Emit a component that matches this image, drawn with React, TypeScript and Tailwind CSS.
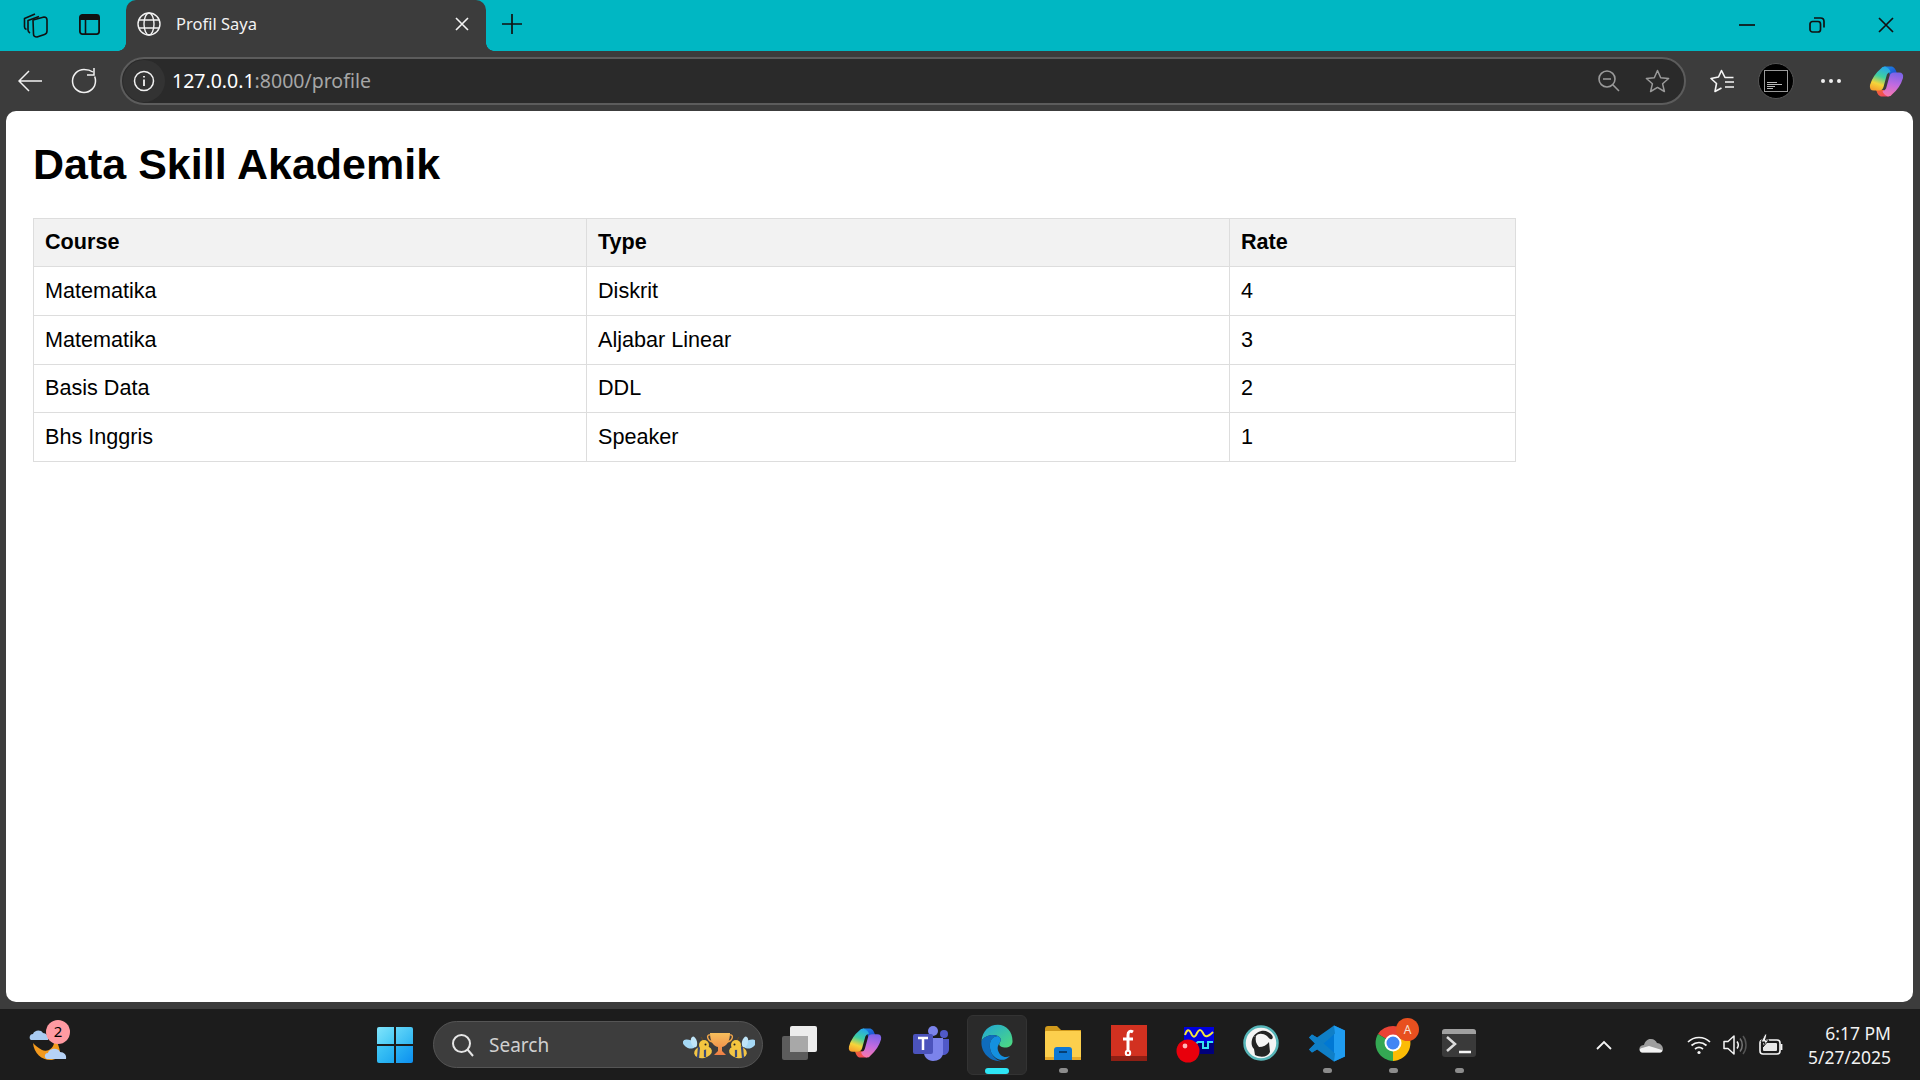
import React from "react";

const Sans = "font-['Noto_Sans','Open_Sans',sans-serif]";

function CopilotLogo({ w = 35, h = 31, id }: { w?: number; h?: number; id: string }) {
  return (
    <svg width={w} height={h} viewBox="0 0 35 31">
      <defs>
        <linearGradient id={id + "a"} x1="0.6" y1="0" x2="0.3" y2="1">
          <stop offset="0" stopColor="#27a8e8" />
          <stop offset="0.4" stopColor="#3fd0a0" />
          <stop offset="0.72" stopColor="#f5d53a" />
          <stop offset="1" stopColor="#f7a12e" />
        </linearGradient>
        <linearGradient id={id + "b"} x1="0.6" y1="0" x2="0.4" y2="1">
          <stop offset="0" stopColor="#7a64e8" />
          <stop offset="0.5" stopColor="#c06ae0" />
          <stop offset="1" stopColor="#f778b0" />
        </linearGradient>
        <linearGradient id={id + "c"} x1="0" y1="0" x2="1" y2="1">
          <stop offset="0" stopColor="#f2682e" />
          <stop offset="1" stopColor="#f0406a" />
        </linearGradient>
        <linearGradient id={id + "d"} x1="0" y1="0" x2="1" y2="1">
          <stop offset="0" stopColor="#1d8fe8" />
          <stop offset="1" stopColor="#1b3fc8" />
        </linearGradient>
      </defs>
      <path d="M15 0.5 L22 0.5 C25 0.5 26.5 3 27.5 6 L28.5 10 L21 10 C20 5 18 2 15 0.5Z" fill={`url(#${id}d)`} />
      <path d="M7 24 L15 24 C16 27 17 29.5 20 30.5 L13 30.5 C10 30.5 8.5 28 7.5 25Z" fill={`url(#${id}c)`} />
      <path d="M12 2.5 Q13 0.5 16 0.5 C19 1.5 21 3.5 21.5 6 C19 6.5 18 8 17.5 10 L14.5 21 Q13.5 24.5 10 24.5 L5 24.5 Q0 24.5 1 19 Q4 9 12 2.5Z" fill={`url(#${id}a)`} />
      <path d="M23 28.5 Q22 30.5 19 30.5 C16 29.5 14 27.5 13.5 25 C16 24.5 17 23 17.5 21 L20.5 10 Q21.5 6.5 25 6.5 L30 6.5 Q35 6.5 34 12 Q31 22 23 28.5Z" fill={`url(#${id}b)`} />
    </svg>
  );
}

function TaskIcon({ children, dot, active }: { children: React.ReactNode; dot?: boolean; active?: boolean }) {
  return (
    <div className="relative w-[66px] h-[66px] flex items-center justify-center">
      {active && <div className="absolute left-[3px] top-[3px] w-[60px] h-[60px] rounded-[6px] bg-[#2a2a2a] border border-[#333333]" />}
      <div className="relative flex items-center justify-center mt-[-3px]">{children}</div>
      {dot && <div className="absolute bottom-[5px] left-[29px] w-[9px] h-[5px] rounded-full bg-[#8c8c8c]" />}
      {active && <div className="absolute bottom-[4px] left-[21px] w-[24px] h-[6px] rounded-full bg-[#2ee6f5]" />}
    </div>
  );
}

function TitleBar() {
  return (
    <div className="h-[51px] bg-[#00b7c3] flex items-stretch shrink-0">
      <div className="w-[126px] flex items-center pl-[23px] pb-[2px]">
        <svg width="26" height="26" viewBox="0 0 26 26" fill="none" stroke="#111" strokeWidth="1.6" strokeLinejoin="round">
          <path d="M10 8 L21 5 C23 5 24 6 24 8 L24 19 C24 21 23 22 21.5 22.5 L14 25 C12 25 10.5 24 10.5 22Z" />
          <path d="M7 21 C5.5 20 5 19 5 18 L5 8.5 L16 4.5" />
          <path d="M3.5 17.5 C2 17 1.5 16 1.5 15 L1.5 6.5 L12 2" />
        </svg>
        <svg className="ml-[30px]" width="21" height="21" viewBox="0 0 21 21" fill="none">
          <rect x="0.9" y="0.9" width="19.2" height="19.2" rx="2.5" stroke="#111" strokeWidth="1.8" />
          <path d="M1 3 C1 1.5 2 1 3 1 L18 1 C19 1 20 1.5 20 3 L20 6 L1 6Z" fill="#111" />
          <path d="M6.5 6 L6.5 20" stroke="#111" strokeWidth="1.6" />
        </svg>
      </div>
      <div className="relative w-[360px] bg-[#3c3c3c] rounded-t-[10px] flex items-center pl-[11px] pb-[3px]">
        <div className="absolute left-[-8px] bottom-0 w-[8px] h-[8px] bg-[radial-gradient(circle_at_0_0,#00b7c3_7.5px,#3c3c3c_8px)]" />
        <div className="absolute right-[-8px] bottom-0 w-[8px] h-[8px] bg-[radial-gradient(circle_at_100%_0,#00b7c3_7.5px,#3c3c3c_8px)]" />
        <svg width="24" height="24" viewBox="0 0 24 24" fill="none" stroke="#f2f2f2" strokeWidth="1.4">
          <circle cx="12" cy="12" r="11" />
          <ellipse cx="12" cy="12" rx="5" ry="11" />
          <path d="M1.8 8 L22.2 8 M1.8 16 L22.2 16" />
        </svg>
        <span className={`${Sans} ml-[15px] text-[16.5px] leading-[24px] text-[#f2f2f2]`}>Profil Saya</span>
        <svg className="ml-auto mr-[17px]" width="14" height="14" viewBox="0 0 14 14" stroke="#f5f5f5" strokeWidth="1.6">
          <path d="M1 1 L13 13 M13 1 L1 13" />
        </svg>
      </div>
      <div className="flex items-center pl-[16px] pb-[3px]">
        <svg width="20" height="20" viewBox="0 0 20 20" stroke="#111" strokeWidth="1.7">
          <path d="M10 0 L10 20 M0 10 L20 10" />
        </svg>
      </div>
      <div className="ml-auto flex items-center pb-[1px]">
        <div className="w-[70px] flex justify-center">
          <svg width="16" height="4" viewBox="0 0 16 4"><path d="M0 2 L16 2" stroke="#111" strokeWidth="1.7" /></svg>
        </div>
        <div className="w-[70px] flex justify-center">
          <svg width="16" height="16" viewBox="0 0 16 16" fill="none" stroke="#111" strokeWidth="1.7">
            <rect x="1" y="4.5" width="10.5" height="10.5" rx="2.5" />
            <path d="M5 1 L11.5 1 C13.5 1 15 2.5 15 4.5 L15 10.5" />
          </svg>
        </div>
        <div className="w-[68px] flex justify-center pr-[1px]">
          <svg width="16" height="16" viewBox="0 0 16 16" stroke="#111" strokeWidth="1.7"><path d="M1 1 L15 15 M15 1 L1 15" /></svg>
        </div>
      </div>
    </div>
  );
}

function Toolbar() {
  return (
    <div className="h-[60px] bg-[#3c3c3c] flex items-center shrink-0">
      <div className="w-[120px] flex items-center pl-[18px] shrink-0">
        <svg width="24" height="24" viewBox="0 0 24 24" fill="none" stroke="#f2f2f2" strokeWidth="1.5">
          <path d="M24 12 L1 12 M11 2 L1 12 L11 22" />
        </svg>
        <svg className="ml-[29px]" width="26" height="26" viewBox="0 0 26 26" fill="none" stroke="#f2f2f2" strokeWidth="1.5">
          <path d="M22 4 C19.5 2.3 16.5 1.5 13 1.5 C6.6 1.5 1.5 6.6 1.5 13 C1.5 19.4 6.6 24.5 13 24.5 C19.4 24.5 24.5 19.4 24.5 13 C24.5 11.5 24.2 10 23.7 8.6" />
          <path d="M23 0 L23 7 L16 7" />
        </svg>
      </div>
      <div className="w-[1566px] h-[48px] rounded-full bg-[#2a2a2a] border-2 border-[#5c5c5c] flex items-center shrink-0">
        <div className="w-[42px] h-[42px] ml-[1px] rounded-full bg-[#333333] flex items-center justify-center shrink-0">
          <svg width="22" height="22" viewBox="0 0 22 22" fill="none" stroke="#f2f2f2" strokeWidth="1.5">
            <circle cx="11" cy="11" r="9.5" />
            <path d="M11 9.5 L11 16 M11 6 L11 7.6" strokeWidth="1.8" />
          </svg>
        </div>
        <span className={`${Sans} ml-[7px] text-[19.5px] leading-[30px] text-[#a6a6a6]`}>
          <span className="text-white">127.0.0.1</span>:8000/profile
        </span>
        <div className="ml-auto flex items-center pr-[14px]">
          <svg width="22" height="22" viewBox="0 0 22 22" fill="none" stroke="#9a9a9a" strokeWidth="1.6">
            <circle cx="9" cy="9" r="8" />
            <path d="M5 9 L13 9 M14.8 14.8 L21 21" />
          </svg>
          <svg className="ml-[25px]" width="25" height="24" viewBox="0 0 25 24" fill="none" stroke="#9a9a9a" strokeWidth="1.5" strokeLinejoin="round">
            <path d="M12.5 1.5 L15.7 8.8 L23.6 9.5 L17.6 14.8 L19.4 22.5 L12.5 18.4 L5.6 22.5 L7.4 14.8 L1.4 9.5 L9.3 8.8Z" />
          </svg>
        </div>
      </div>
      <div className="flex items-center pl-[24px]">
        <svg width="24" height="24" viewBox="0 0 24 24" fill="none" stroke="#f5f5f5" strokeWidth="1.6" strokeLinejoin="round">
          <path d="M23.5 8.5 L15 8.5 L11.5 1.5 L8.5 8 L1 9.5 L6.5 14.5 L5 22.5 L11.5 19" />
          <path d="M15 13 L24 13 M15 18 L24 18" />
        </svg>
        <div className="ml-[24px] w-[36px] h-[36px] rounded-full bg-black border border-[#555555] flex items-center justify-center">
          <div className="w-[24px] h-[22px] border border-[#9a9a9a] flex flex-col justify-end gap-[1px] p-[2px]">
            <div className="h-[1px] w-[10px] bg-[#bbbbbb]" />
            <div className="h-[1px] w-[15px] bg-[#bbbbbb]" />
            <div className="h-[1px] w-[8px] bg-[#bbbbbb]" />
            <div className="h-[1px] w-[6px] bg-[#bbbbbb]" />
          </div>
        </div>
        <svg className="ml-[27px]" width="20" height="4" viewBox="0 0 20 4" fill="#f0f0f0">
          <circle cx="2" cy="2" r="2" /><circle cx="10" cy="2" r="2" /><circle cx="18" cy="2" r="2" />
        </svg>
        <div className="ml-[28px] flex"><CopilotLogo id="cp1" /></div>
      </div>
    </div>
  );
}

const rows: { h: string; c: string[] }[] = [
  { h: "h-[49px]", c: ["Matematika", "Diskrit", "4"] },
  { h: "h-[49px]", c: ["Matematika", "Aljabar Linear", "3"] },
  { h: "h-[48px]", c: ["Basis Data", "DDL", "2"] },
  { h: "h-[49px]", c: ["Bhs Inggris", "Speaker", "1"] },
];

function Page() {
  return (
    <div className="flex-1 min-h-0 ml-[6px] mr-[7px] bg-white rounded-[10px] pt-[28px] pl-[27px]">
      <h1 className="font-['Liberation_Sans',Arial,sans-serif] font-bold text-[43px] leading-[50px] text-black">Data Skill Akademik</h1>
      <table className="mt-[29px] w-[1482px] table-fixed border-collapse font-['Liberation_Sans',Arial,sans-serif] text-[21.6px] text-black">
        <colgroup>
          <col className="w-[553px]" />
          <col className="w-[643px]" />
          <col className="w-[286px]" />
        </colgroup>
        <thead>
          <tr className="h-[48px] bg-[#f2f2f2]">
            {["Course", "Type", "Rate"].map((h) => (
              <th key={h} className="border border-[#dddddd] px-[11px] text-left font-bold">{h}</th>
            ))}
          </tr>
        </thead>
        <tbody>
          {rows.map((r, i) => (
            <tr key={i} className={r.h}>
              {r.c.map((c, j) => (
                <td key={j} className="border border-[#dddddd] px-[11px]">{c}</td>
              ))}
            </tr>
          ))}
        </tbody>
      </table>
    </div>
  );
}

function Taskbar() {
  return (
    <div className="h-[71px] bg-[#1c1c1c] flex items-center shrink-0 relative">
      <div className="relative w-[40px] h-[44px] ml-[28px] shrink-0">
        <svg width="40" height="44" viewBox="0 0 40 44">
          <path d="M5 20 C6 31 15 38 24 37 C29 36 31 33 32 29 C30 18 28 18 26 18 C27 24 20 30 14 27 C10 25 7 22 5 20Z" fill="#f39a1e" />
          <path d="M3 17 C1 16 1 11 5 11 C6 7 13 6 15 10 C18 10 21 13 20 17Z" fill="#a9cbf2" />
          <path d="M19 36 C16 35 16 30 20 30 C21 25 30 24 32 29 C36 29 39 32 38 36Z" fill="#b6d2f6" />
        </svg>
        <div className={`absolute left-[18px] top-[-3px] w-[24px] h-[24px] rounded-full bg-[#ff9aa2] flex items-center justify-center ${Sans} text-[15px] leading-none text-black`}>2</div>
      </div>
      <div className="ml-[309px] w-[36px] h-[36px] grid grid-cols-2 gap-[2px] shrink-0">
        <div className="rounded-tl-[2px] bg-gradient-to-br from-[#7fe4fb] to-[#41c8f5]" />
        <div className="rounded-tr-[2px] bg-gradient-to-br from-[#62d6f8] to-[#2bb5f2]" />
        <div className="rounded-bl-[2px] bg-gradient-to-br from-[#41c8f5] to-[#1ba8f0]" />
        <div className="rounded-br-[2px] bg-gradient-to-br from-[#2bb5f2] to-[#0d8ff0]" />
      </div>
      <div className="ml-[20px] w-[330px] h-[47px] rounded-full bg-[#3d3d3d] border border-[#555555] flex items-center pl-[17px] pr-[7px] shrink-0">
        <svg width="24" height="24" viewBox="0 0 24 24" fill="none" stroke="#e6e6e6" strokeWidth="2">
          <circle cx="10.5" cy="10.5" r="8.5" />
          <path d="M16.5 16.5 L22 23" />
        </svg>
        <span className={`${Sans} ml-[14px] text-[19px] leading-[28px] text-[#d0d0d0]`}>Search</span>
        <svg className="ml-auto" width="72" height="40" viewBox="8 3 72 40">
          <defs>
            <linearGradient id="tr" x1="0" y1="0" x2="0" y2="1">
              <stop offset="0" stopColor="#f7bf5c" />
              <stop offset="1" stopColor="#ef7f45" />
            </linearGradient>
          </defs>
          <ellipse cx="14" cy="22" rx="6.5" ry="4" transform="rotate(25 14 22)" fill="#a5d8f5" />
          <ellipse cx="19" cy="20" rx="3" ry="5.5" transform="rotate(-15 19 20)" fill="#bfe4f8" />
          <ellipse cx="28" cy="30" rx="9" ry="6" transform="rotate(-10 28 30)" fill="#f2c545" />
          <path d="M24 25 L23 36 M30 24 L30 35" stroke="#3b4a78" strokeWidth="2.2" />
          <circle cx="29" cy="23" r="5" fill="#f4c63f" />
          <circle cx="30.5" cy="22.5" r="1" fill="#222" />
          <path d="M28 18 L26 15" stroke="#6b4a20" strokeWidth="1" />
          <path d="M35 11 L55 11 C55 19 52 24 47 25 L47 29 L51 33 L39 33 L43 29 L43 25 C38 24 35 19 35 11Z" fill="url(#tr)" />
          <path d="M35 13 C31 12 32 19 38 20 M55 13 C59 12 58 19 52 20" fill="none" stroke="#f3a64a" strokeWidth="1.4" />
          <ellipse cx="75" cy="22" rx="6.5" ry="4" transform="rotate(-25 75 22)" fill="#a5d8f5" />
          <ellipse cx="70" cy="20" rx="3" ry="5.5" transform="rotate(15 70 20)" fill="#bfe4f8" />
          <ellipse cx="63" cy="30" rx="9" ry="6" transform="rotate(10 63 30)" fill="#f2c545" />
          <path d="M67 25 L68 36 M61 24 L61 35" stroke="#3b4a78" strokeWidth="2.2" />
          <circle cx="61" cy="23" r="5" fill="#f4c63f" />
          <circle cx="59.5" cy="22.5" r="1" fill="#222" />
          <path d="M62 18 L64 15" stroke="#6b4a20" strokeWidth="1" />
        </svg>
      </div>
      <div className="ml-[3px] flex items-center">
        <TaskIcon>
          <svg width="36" height="36" viewBox="0 0 36 36">
            <rect x="1" y="11" width="26" height="24" rx="2" fill="#5c5c5c" />
            <rect x="9" y="1" width="27" height="26" rx="2" fill="#ededed" />
            <rect x="9" y="11" width="18" height="16" fill="#a8a8a8" />
          </svg>
        </TaskIcon>
        <TaskIcon><CopilotLogo id="cp2" w={34} h={38} /></TaskIcon>
        <TaskIcon>
          <svg width="36" height="36" viewBox="0 0 36 36">
            <circle cx="20" cy="6" r="5" fill="#7b83eb" />
            <circle cx="31" cy="9" r="4" fill="#5059c9" />
            <path d="M26 14 L36 14 L36 24 C36 28 33 30 30 30 L26 30Z" fill="#5059c9" />
            <path d="M11 13 L30 13 L30 28 C30 33 25 36 20 36 C15 36 11 32 11 28Z" fill="#7b83eb" />
            <rect x="0" y="9" width="20" height="20" rx="2" fill="#4b53bc" />
            <path d="M5 13 L15 13 M10 13 L10 25" stroke="#fff" strokeWidth="2.5" />
          </svg>
        </TaskIcon>
        <TaskIcon active>
          <svg width="36" height="38" viewBox="0 0 38 44">
            <defs>
              <linearGradient id="ed1" x1="0" y1="0" x2="1" y2="1">
                <stop offset="0" stopColor="#1fa5d8" />
                <stop offset="1" stopColor="#4fdc7d" />
              </linearGradient>
            </defs>
            <path d="M1 20 C2 8 10 1 20 1 C30 1 37 9 37 20 C37 26 31 28 26 27 C22 26 21 24 22 22 C24 19 24 16 20 14 C13 11 4 14 1 20Z" fill="url(#ed1)" />
            <path d="M1 20 C4 14 13 11 20 14 C11 15 9 24 12 32 C14 38 19 42 24 43 C12 44 0 34 1 20Z" fill="#0f6cbd" />
            <path d="M20 14 C11 15 9 24 12 32 C15 40 26 46 34 37 C28 40 22 37 20 30 C19 26 21 24 22 22 C24 19 24 16 20 14Z" fill="#1490df" />
          </svg>
        </TaskIcon>
        <TaskIcon dot>
          <svg width="36" height="34" viewBox="0 0 36 34">
            <path d="M0 3 C0 1 1 0 3 0 L12 0 L16 4 L36 4 L36 10 L0 10Z" fill="#d19a1c" />
            <rect x="0" y="5" width="36" height="29" rx="1" fill="#fccf4d" />
            <path d="M0 31 L36 31 L36 34 L0 34Z" fill="#e6a92a" />
            <path d="M9 34 L9 24 C9 22 10 21 12 21 L24 21 C26 21 27 22 27 24 L27 34Z" fill="#0f78d4" />
            <path d="M14 26 L22 26" stroke="#063f74" strokeWidth="2" />
          </svg>
        </TaskIcon>
        <TaskIcon>
          <div className="relative w-[36px] h-[36px] bg-[#d23120] flex items-center justify-center">
            <div className="absolute left-0 right-0 bottom-0 h-[5px] bg-[#8f1f14]" />
            <svg width="16" height="28" viewBox="0 0 16 28" fill="none" stroke="#fff" strokeWidth="3">
              <path d="M12 3 C9 1 7 3 7 6 L7 21" />
              <path d="M2 10 L12 10" />
              <circle cx="7" cy="24" r="2.2" strokeWidth="2" />
            </svg>
          </div>
        </TaskIcon>
        <TaskIcon>
          <svg width="38" height="42" viewBox="0 0 38 42">
            <rect x="8" y="5" width="30" height="16" fill="#0000e0" />
            <rect x="8" y="21" width="30" height="11" fill="#00007c" />
            <path d="M9 13 C11 7 13 7 15 11 C17 16 19 16 21 11 C23 7 25 7 27 11 C29 16 32 15 37 10" fill="none" stroke="#f5e63c" strokeWidth="2" />
            <path d="M17 24 L22 20 L27 20 L27 26 L32 26 L32 20 L37 20" fill="none" stroke="#36e0f0" strokeWidth="2" />
            <circle cx="12" cy="29" r="11.5" fill="#e8000c" />
            <circle cx="9" cy="24" r="2.4" fill="#ffb8b8" />
          </svg>
        </TaskIcon>
        <TaskIcon>
          <svg width="36" height="36" viewBox="0 0 36 36">
            <circle cx="18" cy="18" r="16.5" fill="#f5f5f5" stroke="#57b5b8" strokeWidth="2.5" />
            <path d="M10 12 C13 7 20 4 25 7 C29 9 31 12 29 14 C27 15 26 13 24 11 C20 8 15 8 13 11Z" fill="#242424" />
            <path d="M10 12 C8 16 8 21 11 24 L12 30 C18 33 25 32 27 27 L26 17 C24 20 20 22 16 22 C13 19 12 15 13 11Z" fill="#242424" />
          </svg>
        </TaskIcon>
        <TaskIcon dot>
          <svg width="36" height="37" viewBox="0 0 36 36">
            <path d="M25 0 L36 5 L36 31 L25 36 L8 20Z" fill="#0078d4" />
            <path d="M25 0 L25 36 L36 31 L36 5Z" fill="#1f9cf0" />
            <path d="M26 8 L8 24 L3 27 L0 24 L6 18 L0 12 L3 9 L8 12 L25 0Z" fill="#0f7fc7" />
            <path d="M26 28 L8 12 L3 9 L0 12 L6 18 L0 24 L3 27 L8 24 L25 36Z" fill="#0f7fc7" />
          </svg>
        </TaskIcon>
        <TaskIcon dot>
          <div className="relative w-[36px] h-[36px]">
            <svg width="36" height="36" viewBox="0 0 36 36">
              <path d="M18 18 L3 9 A18 18 0 0 1 33 9Z" fill="#ea4335" />
              <path d="M18 18 L33 9 A18 18 0 0 1 18 36Z" fill="#fbbc05" />
              <path d="M18 18 L18 36 A18 18 0 0 1 3 9Z" fill="#34a853" />
              <circle cx="18" cy="18" r="8.5" fill="#fff" />
              <circle cx="18" cy="18" r="6.5" fill="#4285f4" />
            </svg>
            <div className={`absolute left-[21px] top-[-7px] w-[23px] h-[23px] rounded-full bg-[#e8501f] flex items-center justify-center ${Sans} text-[12px] leading-none text-[#f5e0d5]`}>A</div>
          </div>
        </TaskIcon>
        <TaskIcon dot>
          <div className="w-[34px] h-[28px] rounded-[3px] bg-[#3a3a3a] overflow-hidden">
            <div className="h-[5px] bg-[#a0a0a0]" />
            <svg width="34" height="23" viewBox="0 0 34 23" fill="none" stroke="#dcdcdc" strokeWidth="2.5">
              <path d="M5 3 L13 10 L5 17" />
              <path d="M17 18 L29 18" stroke="#f5f5f5" />
            </svg>
          </div>
        </TaskIcon>
      </div>
      <div className="ml-auto flex items-center pr-[29px]">
        <svg width="16" height="10" viewBox="0 0 16 10" fill="none" stroke="#f5f5f5" strokeWidth="1.8"><path d="M1 9 L8 2 L15 9" /></svg>
        <svg className="ml-[27px]" width="24" height="16" viewBox="0 0 24 16">
          <path d="M3 15.5 C1 15 0 13 0.5 11 C1 9 3 8 5 8 C6 4 9 1.5 12 2 C15 2 17 4 18 6 C21 6 24 9 24 12 C24 14 23 15.5 21 15.5Z" fill="#9e9e9e" />
          <path d="M3 15.5 C0 15 0 11 3 11 L10 9 L23 13 C23.5 14.5 22.5 15.5 21 15.5Z" fill="#f2f2f2" />
        </svg>
        <svg className="ml-[24px]" width="24" height="20" viewBox="0 0 24 20" fill="none" stroke="#f5f5f5" strokeWidth="1.7">
          <path d="M1 7 C7 1 17 1 23 7 M4.5 10.5 C9 6.5 15 6.5 19.5 10.5 M8 14 C10.5 12 13.5 12 16 14" />
          <circle cx="12" cy="17.5" r="1.6" fill="#f5f5f5" stroke="none" />
        </svg>
        <svg className="ml-[12px]" width="24" height="22" viewBox="0 0 24 22" fill="none" stroke="#f5f5f5" strokeWidth="1.5" strokeLinejoin="round">
          <path d="M1 7.5 L5 7.5 L11 2 L11 20 L5 14.5 L1 14.5Z" />
          <path d="M14 7.5 C15.5 9.5 15.5 12.5 14 14.5" />
          <path d="M17 4.5 C20 8 20 14 17 17.5" stroke="#777" />
          <path d="M20 2 C24 7 24 15 20 20" stroke="#555" />
        </svg>
        <svg className="ml-[12px]" width="24" height="22" viewBox="0 0 24 22" fill="none">
          <rect x="1" y="6" width="20" height="14" rx="3" stroke="#f5f5f5" strokeWidth="1.6" />
          <rect x="4" y="9" width="14" height="8" rx="1" fill="#e8e8e8" />
          <path d="M22.5 10 L22.5 16" stroke="#f5f5f5" strokeWidth="1.8" />
          <path d="M6 0 L2 8 L6 8 L4 13 L10 6 L6.5 6 L8 0Z" fill="#f5f5f5" stroke="#1c1c1c" />
        </svg>
        <div className={`${Sans} ml-[25px] flex flex-col items-end text-[17.5px] leading-[24px] text-[#f2f2f2]`}>
          <span>6:17 PM</span>
          <span>5/27/2025</span>
        </div>
      </div>
    </div>
  );
}

export default function App() {
  return (
    <div className="w-[1920px] h-[1080px] bg-[#3c3c3c] flex flex-col overflow-hidden">
      <TitleBar />
      <Toolbar />
      <Page />
      <div className="h-[7px] shrink-0" />
      <Taskbar />
    </div>
  );
}
